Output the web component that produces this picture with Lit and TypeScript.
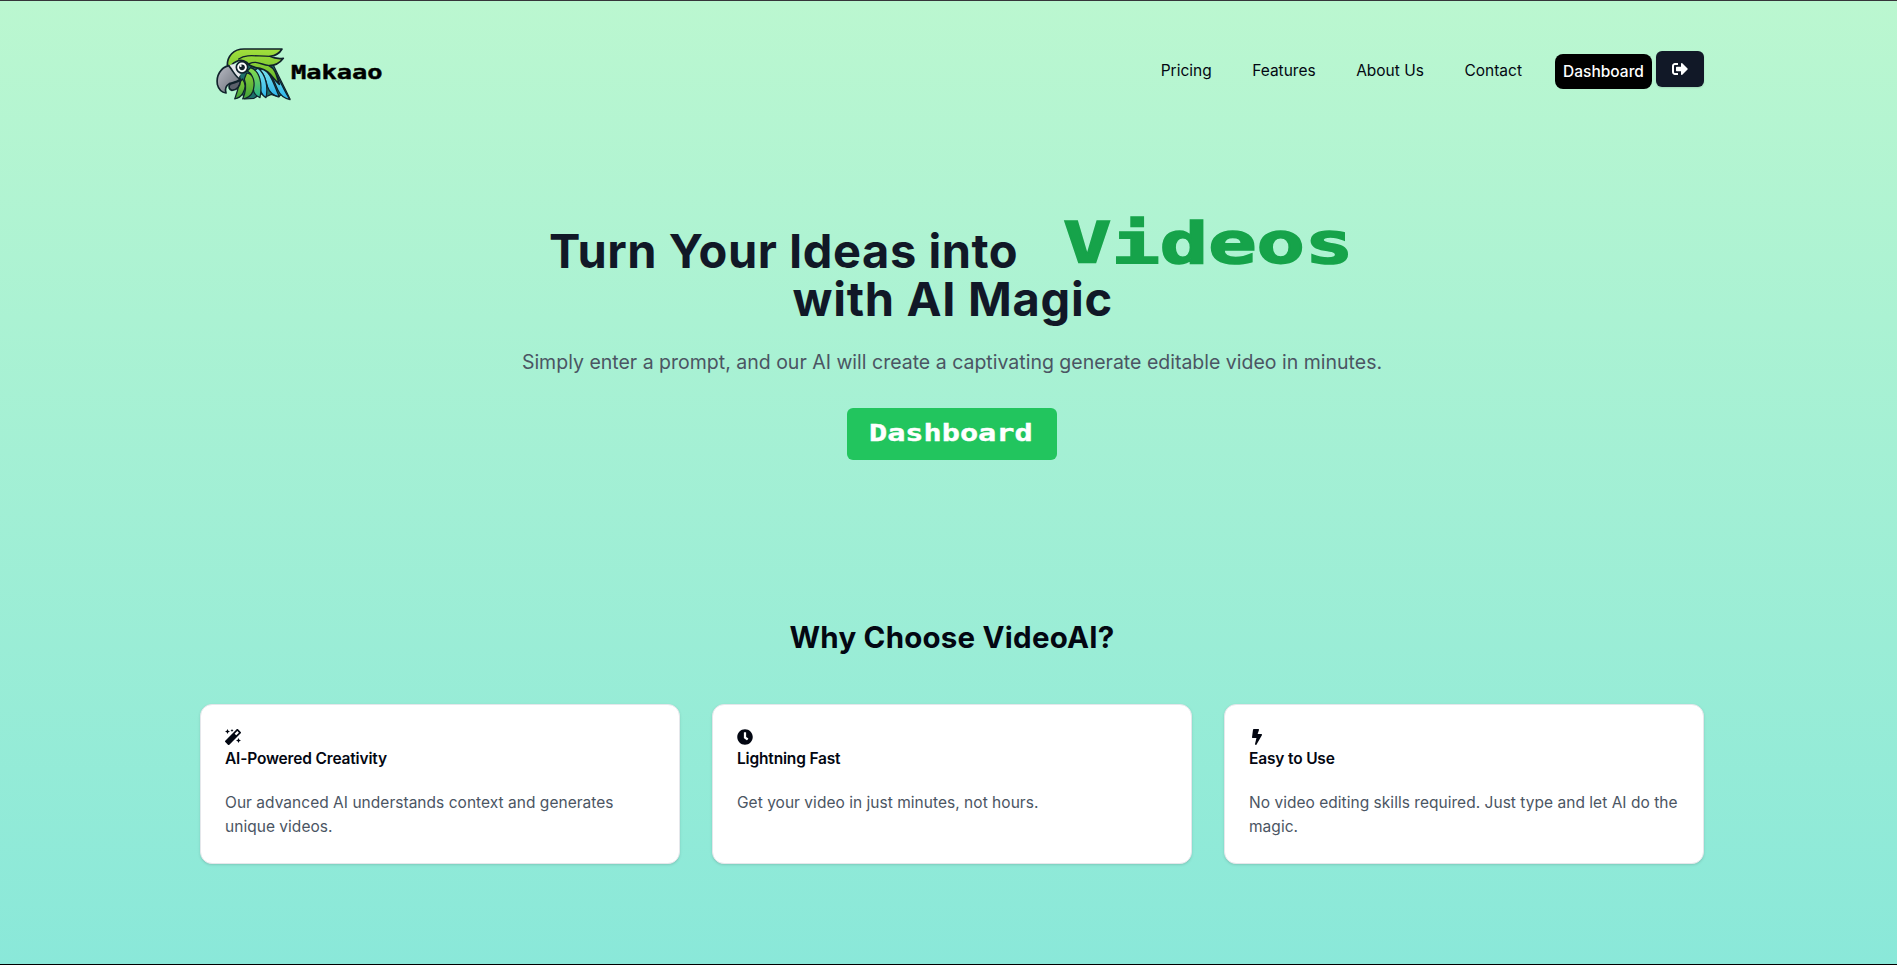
import { LitElement, html, css, svg } from "lit";
import { customElement, property } from "lit/decorators.js";

const ICONS: Record<string, { box: string; d: string }> = {
  magic: {
    box: "0 0 512 512",
    d: "M224 96l16-32 32-16-32-16-16-32-16 32-32 16 32 16 16 32zM80 160l26.66-53.33L160 80l-53.34-26.67L80 0 53.34 53.33 0 80l53.34 26.67L80 160zm352 128l-26.66 53.33L352 368l53.34 26.67L432 448l26.66-53.33L512 368l-53.34-26.67L432 288zm70.62-193.77L417.77 9.38C411.53 3.12 403.34 0 395.15 0c-8.19 0-16.38 3.12-22.63 9.38L9.38 372.52c-12.5 12.5-12.5 32.76 0 45.25l84.85 84.85c6.25 6.25 14.44 9.37 22.62 9.37 8.19 0 16.38-3.12 22.63-9.37l363.14-363.15c12.5-12.48 12.5-32.75 0-45.24zM359.45 203.46l-50.91-50.91 86.6-86.6 50.91 50.91-86.6 86.6z",
  },
  clock: {
    box: "0 0 512 512",
    d: "M256 8C119 8 8 119 8 256s111 248 248 248 248-111 248-248S393 8 256 8zm57.1 350.1L224.9 294c-3.100-2.300-4.900-5.900-4.900-9.700V116c0-6.600 5.400-12 12-12h48c6.600 0 12 5.400 12 12v137.700l63.500 46.200c5.400 3.900 6.500 11.400 2.600 16.800l-28.200 38.800c-3.900 5.300-11.400 6.500-16.800 2.600z",
  },
  bolt: {
    box: "0 0 320 512",
    d: "M296 160H180.6l42.6-129.8C227.2 15 215.7 0 200 0H56C44 0 33.8 8.9 32.2 20.8l-32 240C-1.7 275.2 9.5 288 24 288h118.7L96.6 482.5c-3.6 15.2 8 29.5 23.3 29.5 8.4 0 16.4-4.4 20.8-12l176-304c9.3-15.900-2.200-36-20.700-36z",
  },
  logout: {
    box: "0 0 512 512",
    d: "M497 273L329 441c-15 15-41 4.500-41-17v-96H152c-13.300 0-24-10.700-24-24v-96c0-13.300 10.700-24 24-24h136V88c0-21.400 25.900-32 41-17l168 168c9.300 9.400 9.300 24.600 0 34zM192 436v-40c0-6.600-5.400-12-12-12H96c-17.700 0-32-14.300-32-32V160c0-17.700 14.300-32 32-32h84c6.600 0 12-5.400 12-12V76c0-6.600-5.400-12-12-12H96c-53 0-96 43-96 96v192c0 53 43 96 96 96h84c6.600 0 12-5.400 12-12z",
  },
};

@customElement("ui-icon")
class UiIcon extends LitElement {
  static styles = css`
    :host { display: block; width: 16px; height: 16px; }
    .glyph { display: block; width: 16px; height: 16px; fill: currentColor; }
  `;
  @property() name = "magic";
  render() {
    const icon = ICONS[this.name];
    return html`<svg class="glyph" viewBox=${icon.box}>${svg`<path d=${icon.d}></path>`}</svg>`;
  }
}

@customElement("parrot-logo")
class ParrotLogo extends LitElement {
  static styles = css`
    :host { display: block; width: 90px; height: 62px; }
    .bird { display: block; width: 90px; height: 62px; }
  `;
  render() {
    return html`<svg class="bird" viewBox="0 0 270 186">
      <defs>
        <linearGradient id="crest" x1="0" y1="0" x2="0" y2="1">
          <stop offset="0" stop-color="#a3e03c" /><stop offset="1" stop-color="#5fb52c" />
        </linearGradient>
        <linearGradient id="green" x1="0" y1="0" x2="0" y2="1">
          <stop offset="0" stop-color="#86cc34" /><stop offset="1" stop-color="#3fa03c" />
        </linearGradient>
        <linearGradient id="teal" x1="0" y1="0" x2="0" y2="1">
          <stop offset="0" stop-color="#8add45" /><stop offset="1" stop-color="#25b08e" />
        </linearGradient>
        <linearGradient id="blue" x1="0" y1="0" x2="0" y2="1">
          <stop offset="0" stop-color="#7fe6ee" /><stop offset="1" stop-color="#2db4ea" />
        </linearGradient>
        <linearGradient id="beak" x1="0" y1="0" x2="1" y2="1">
          <stop offset="0" stop-color="#b9bcc4" /><stop offset="1" stop-color="#666a75" />
        </linearGradient>
      </defs>
      <g stroke="#10222b" stroke-width="5" stroke-linejoin="round" stroke-linecap="round">
        <g stroke-width="3.6">
          <path fill="#1d6f6a" d="M88 84L120 60L190 66C202 92 222 130 240 168L212 156L205 162L184 154L166 162L154 152L132 166L104 168L92 140Z" />
          <path fill="url(#blue)" d="M172 70C204 84 212 130 240 170C222 166 210 156 204 142C192 118 190 98 168 76Z" />
          <path fill="url(#blue)" d="M160 74C188 96 194 134 208 161C190 158 178 148 173 132C167 110 164 96 150 80Z" />
          <path fill="url(#blue)" d="M144 76C170 96 174 136 168 164C156 156 149 144 149 126C150 104 146 94 134 82Z" />
          <path fill="url(#teal)" d="M122 74C150 84 158 122 150 164C136 158 129 148 130 134C132 108 128 92 112 84Z" />
          <path fill="url(#green)" d="M110 90C134 94 136 124 128 146C124 156 114 165 98 168C108 146 110 128 103 108Z" />
          <path fill="url(#green)" d="M97 108C108 120 106 138 98 152C92 162 84 166 74 168C80 152 84 142 87 122Z" />
        </g>
        <path fill="url(#crest)" d="M52 66C52 40 70 18 102 18H216C208 32 198 38 180 40C192 46 204 48 220 46C208 62 194 68 178 68C198 78 200 100 208 124C186 104 178 82 150 76C136 74 126 72 118 66C110 54 94 48 78 56C70 60 64 64 62 72Z" />
        <path fill="none" stroke-width="4" d="M86 48C110 32 136 40 180 40M118 62C140 52 150 64 178 68" />
        <path fill="#e6e9ec" d="M58 68C66 62 74 62 82 70L92 94L84 106L58 88Z" stroke="none" />
        <path fill="url(#beak)" d="M56 68C32 74 18 98 22 124C26 140 36 148 48 150C44 138 48 128 58 122C72 118 84 116 90 108C76 102 70 84 56 68Z" />
        <path fill="#5b606b" d="M60 124C54 132 58 140 66 142C80 142 90 130 92 110C84 118 72 118 60 124Z" />
        <circle cx="96" cy="73" r="17" fill="#fff" />
        <circle cx="96" cy="73" r="8.500" fill="#15222c" stroke="none" />
        <circle cx="92" cy="69" r="3.200" fill="#fff" stroke="none" />
      </g>
    </svg>`;
  }
}

@customElement("feature-card")
class FeatureCard extends LitElement {
  static styles = css`
    :host {
      display: block; box-sizing: border-box; height: 160px; padding: 24px;
      background: #fff; border: 1px solid #e5e7eb; border-radius: 12px;
      box-shadow: 0 1px 3px rgba(0, 0, 0, 0.1), 0 1px 2px -1px rgba(0, 0, 0, 0.1);
      color: #030712;
    }
    .title { margin: 6px 0 24px; font-size: 15.5px; line-height: 16px; font-weight: 600; letter-spacing: -0.17px; }
    .text { margin: 0; font-size: 15.5px; line-height: 24px; letter-spacing: 0.03px; color: #4b5563; }
  `;
  @property() icon = "magic";
  @property() heading = "";
  @property() text = "";
  render() {
    return html`<ui-icon name=${this.icon}></ui-icon>
      <h3 class="title">${this.heading}</h3>
      <p class="text">${this.text}</p>`;
  }
}

@customElement("app-root")
class AppRoot extends LitElement {
  static styles = css`
    :host {
      display: block; box-sizing: border-box; height: 965px; overflow: hidden;
      border-top: 1px solid #35353a; border-bottom: 1px solid #000;
      padding: 0 193px 0 200px;
      background: linear-gradient(#bbf7d0, #8ae8d9);
      font-family: Inter, "Liberation Sans", sans-serif; color: #030712;
    }
    .header { display: flex; align-items: flex-start; height: 120px; }
    .brand { display: flex; padding: 42px 0 0 10px; }
    .pixel {
      font-family: "DejaVu Sans Mono", monospace; font-weight: 700;
      display: block; transform-origin: 0 0; white-space: nowrap;
    }
    .name { margin: 19px 0 0 -9px; font-size: 19px; line-height: 20px; transform: scaleX(1.335); color: #000; -webkit-text-stroke: 0.4px #000; }
    .nav { display: flex; margin-left: auto; padding-top: 50px; align-items: flex-start; }
    .link { margin: 8px 40.5px 0 0; font-size: 15.5px; line-height: 24px; letter-spacing: 0; white-space: nowrap; }
    .link.last { margin-right: 33px; }
    .dash {
      width: 97px; height: 35px; margin: 3px 4px 0 0; border-radius: 8px; background: #000; color: #fff;
      font-size: 15.5px; font-weight: 500; line-height: 35px; text-align: center;
    }
    .exit {
      display: flex; align-items: center; justify-content: center; width: 48px; height: 36px;
      border-radius: 6px; background: #111827; color: #fff; box-shadow: 0 1px 2px rgba(0, 0, 0, 0.12);
    }
    .hero { display: flex; flex-direction: column; height: 498px; box-sizing: border-box; padding-top: 106px; }
    .headline { margin: 0; font-size: 47px; line-height: 48px; font-weight: 700; color: #111827; }
    .row { display: flex; height: 48px; padding-left: 349px; letter-spacing: 0.55px; white-space: nowrap; }
    .row.second { padding-left: 592.5px; letter-spacing: 0.72px; }
    .videos { margin: -8px 0 0 45px; font-size: 57px; line-height: 48px; letter-spacing: 0; transform: scaleX(1.41); color: #16a34a; -webkit-text-stroke: 1.6px #16a34a; }
    .lead { margin: 25px 0 32px; font-size: 19.5px; line-height: 28px; text-align: center; color: #4b5563; }
    .cta {
      box-sizing: border-box; width: 210px; height: 52px; margin-left: 647px; padding-left: 22px;
      border-radius: 6px; background: #22c55e; color: #fff;
    }
    .cta-text { font-size: 23.5px; line-height: 50px; transform: scaleX(1.285); -webkit-text-stroke: 0.4px #fff; }
    .why { margin: 0 0 49px; font-size: 29.5px; line-height: 36px; font-weight: 700; letter-spacing: 0.22px; text-align: center; }
    .cards { display: grid; grid-template-columns: repeat(3, 1fr); gap: 32px; }
  `;
  render() {
    return html`
      <header class="header">
        <div class="brand">
          <parrot-logo></parrot-logo>
          <span class="pixel name">Makaao</span>
        </div>
        <nav class="nav">
          <span class="link">Pricing</span>
          <span class="link">Features</span>
          <span class="link">About Us</span>
          <span class="link last">Contact</span>
          <span class="dash">Dashboard</span>
          <span class="exit"><ui-icon name="logout"></ui-icon></span>
        </nav>
      </header>
      <section class="hero">
        <h1 class="headline">
          <span class="row">Turn Your Ideas into<span class="pixel videos">Videos</span></span>
          <span class="row second">with AI Magic</span>
        </h1>
        <p class="lead">Simply enter a prompt, and our AI will create a captivating generate editable video in minutes.</p>
        <div class="cta"><span class="pixel cta-text">Dashboard</span></div>
      </section>
      <section>
        <h2 class="why">Why Choose VideoAI?</h2>
        <div class="cards">
          <feature-card icon="magic" heading="AI-Powered Creativity" text="Our advanced AI understands context and generates unique videos."></feature-card>
          <feature-card icon="clock" heading="Lightning Fast" text="Get your video in just minutes, not hours."></feature-card>
          <feature-card icon="bolt" heading="Easy to Use" text="No video editing skills required. Just type and let AI do the magic."></feature-card>
        </div>
      </section>
    `;
  }
}
